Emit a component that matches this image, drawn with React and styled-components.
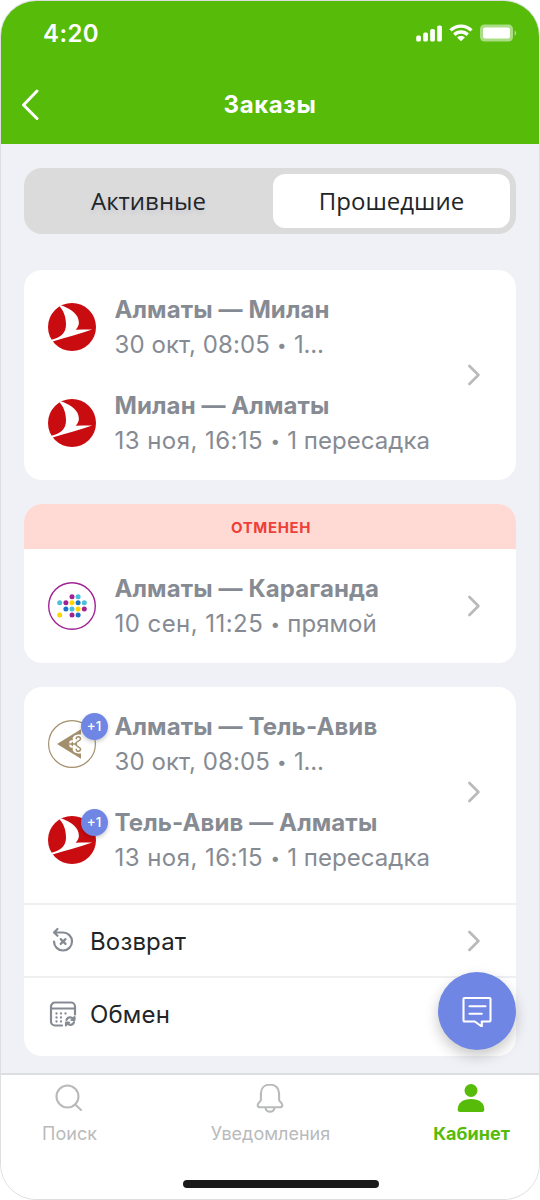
import React from "react"
import styled, { createGlobalStyle } from 'styled-components'

const Colors = {
  green: '#56bb09',
  page: '#f0f1f7',
  muted: '#868b93',
  text: '#222528',
  icon: '#b9babc',
  blue: '#7086e4',
  red: '#c90c0f',
  border: '#dcdee2'
}

const GlobalStyle = createGlobalStyle`
  html, body {
    margin: 0;
    padding: 0;
    background-color: #ffffff;
    font-family: Inter, "Liberation Sans", sans-serif;
  }

  * {
    box-sizing: border-box;
  }
`

const Phone = styled.div`
  position: relative;
  display: flex;
  flex-direction: column;
  width: 540px;
  height: 1200px;
  overflow: hidden;
  border: 1px solid ${Colors.border};
  border-radius: 36px;
  background: ${Colors.page};
`

const Header = styled.header`
  flex: none;
  height: 143px;
  background: ${Colors.green};
  color: #ffffff;
`

const StatusBar = styled.div`
  display: flex;
  align-items: center;
  justify-content: space-between;
  height: 64px;
  padding: 0 22px 0 42px;
`

const Clock = styled.span`
  font-size: 24px;
  font-weight: 600;
  letter-spacing: 0.4px;
`

const StatusIcons = styled.div`
  display: flex;
  align-items: center;
  gap: 7px;
`

const TitleBar = styled.div`
  display: grid;
  grid-template-columns: 60px 1fr 60px;
  align-items: center;
  height: 79px;
`

const BackButton = styled.button`
  display: flex;
  height: 40px;
  padding: 4px 0 4px 18px;
  border: 0;
  background: none;
  color: inherit;
`

const Title = styled.h1`
  margin: 0;
  text-align: center;
  font-size: 24px;
  font-weight: 700;
  letter-spacing: 0.6px;
`

const Content = styled.main`
  flex: 1;
  display: flex;
  flex-direction: column;
  gap: 24px;
  min-height: 0;
  padding: 24px 23px 0;
`

const Segment = styled.div`
  display: grid;
  grid-template-columns: 243px 237px;
  flex: none;
  height: 66px;
  margin-bottom: 12px;
  padding: 6px;
  border-radius: 18px;
  background: #dbdbdb;
`

const SegmentTab = styled.button`
  padding: ${p => p.$active ? '0 0 1px' : '0 6px 1px 0'};
  border: 0;
  border-radius: 12px;
  background: ${p => p.$active ? '#ffffff' : 'transparent'};
  color: ${Colors.text};
  font-family: "Open Sans", "Noto Sans", sans-serif;
  font-size: 24px;
  text-shadow: ${p => p.$active ? 'none' : '0 3px 4px rgba(90, 100, 180, 0.14)'};
`

const Card = styled.section`
  flex: none;
  overflow: hidden;
  border-radius: 18px;
  background: #ffffff;
`

const Banner = styled.div`
  height: 45px;
  padding-left: 2px;
  line-height: 47px;
  background: #ffdad5;
  color: #ee4038;
  text-align: center;
  font-size: 15px;
  font-weight: 700;
  letter-spacing: 0.6px;
`

const Trip = styled.div`
  display: flex;
  align-items: center;
  justify-content: space-between;
  padding: 24px 35px 24px 24px;
`

const Legs = styled.div`
  display: flex;
  flex-direction: column;
  gap: 30px;
`

const Leg = styled.div`
  display: flex;
  align-items: center;
  gap: 18.5px;
  height: 66px;
`

const LegText = styled.div`
  padding-top: 1px;
`

const LogoBox = styled.div`
  position: relative;
  width: 48px;
  height: 48px;

  svg {
    display: block;
  }
`

const Badge = styled.span`
  position: absolute;
  top: -7.5px;
  right: -12px;
  width: 27px;
  height: 27px;
  padding-right: 1px;
  border-radius: 50%;
  background: ${Colors.blue};
  box-shadow: 0 2px 4px rgba(0, 0, 0, 0.2);
  color: #ffffff;
  text-align: center;
  font-size: 13.5px;
  font-weight: 500;
  line-height: 27px;
`

const Route = styled.div`
  color: ${Colors.muted};
  font-size: 24px;
  font-weight: 700;
  line-height: 34px;
  letter-spacing: 0.1px;
  white-space: nowrap;
`

const Details = styled.div`
  display: flex;
  align-items: center;
  height: 35px;
  color: ${Colors.muted};
  font-size: 24px;
  line-height: 35px;
  white-space: nowrap;
`

const FlightDate = styled.span`
  letter-spacing: ${p => p.$spacing}px;
`

const Dot = styled.span`
  width: 24px;
  padding-top: 2px;
  text-align: center;
  font-size: 17px;
`

const Stops = styled.span`
  letter-spacing: ${p => p.$short ? '-0.2px' : '0.05px'};
`

const ActionRow = styled.div`
  display: flex;
  align-items: center;
  height: 73px;
  margin-bottom: ${p => p.$last ? '7px' : '0'};
  padding: 0 35px 0 24px;
  border-top: 2px solid #eff0f1;
`

const ActionLabel = styled.span`
  flex: 1;
  margin-left: 12px;
  padding-top: 2px;
  color: ${Colors.text};
  font-size: 24px;
  letter-spacing: 0.15px;
`

const Actions = styled.div`
  margin-top: -18px;
  padding-top: 24px;
`

const ChatButton = styled.button`
  position: absolute;
  top: 971px;
  left: 437px;
  display: flex;
  align-items: center;
  justify-content: center;
  width: 78px;
  height: 78px;
  border: 0;
  border-radius: 50%;
  background: ${Colors.blue};
  box-shadow: 0 6px 14px rgba(0, 0, 0, 0.22);
`

const TabBar = styled.nav`
  display: flex;
  flex: none;
  flex-direction: column;
  align-items: center;
  justify-content: space-between;
  height: 126px;
  padding-bottom: 11px;
  border-top: 2px solid ${Colors.border};
  background: #ffffff;
`

const Tabs = styled.div`
  display: grid;
  grid-template-columns: 136px 266px 136px;
  width: 100%;
`

const Tab = styled.div`
  display: flex;
  flex-direction: column;
  align-items: center;
  padding-top: 5px;
  color: ${p => p.$active ? Colors.green : Colors.icon};

  svg {
    margin-bottom: 6px;
  }
`

const TabLabel = styled.span`
  padding-left: 1px;
  font-size: 18px;
  font-weight: ${p => p.$active ? 700 : 400};
  line-height: 24px;
`

const HomeIndicator = styled.div`
  width: 196px;
  height: 8px;
  margin-left: 22px;
  border-radius: 4px;
  background: #1a1a1a;
`

const SignalIcon = () => (
  <svg width="26" height="17" viewBox="0 0 26 17" fill="#fff">
    <rect x="0.2" y="10.5" width="4.7" height="6" rx="1.6" />
    <rect x="7.2" y="7.5" width="4.7" height="9" rx="1.6" />
    <rect x="14.2" y="4" width="4.7" height="12.5" rx="1.6" />
    <rect x="21.2" y="0.5" width="4.7" height="16" rx="1.6" />
  </svg>
)

const WifiIcon = () => (
  <svg width="24" height="18" viewBox="0 0 24 18">
    <g fill="none" stroke="#fff" strokeWidth="3.3">
      <path d="M1.500 6.400C7.400 0.700 16.600 0.700 22.500 6.400" />
      <path d="M5.300 10.700c3.700-3.600 9.700-3.600 13.400 0" />
    </g>
    <path d="M12 17.300l-3.900-3.900c2.200-1.900 5.600-1.900 7.800 0z" fill="#fff" />
  </svg>
)

const BatteryIcon = () => (
  <svg width="37" height="18" viewBox="0 0 37 18">
    <rect x="0" y="0.5" width="33" height="17" rx="4.5" fill="#fff" opacity="0.5" />
    <rect x="3" y="3.5" width="27" height="11" rx="2" fill="#fff" />
    <path d="M34.600 6.500c2.200 1 2.200 4.200 0 5.200z" fill="#fff" opacity="0.5" />
  </svg>
)

const Chevron = () => (
  <svg width="14" height="24" viewBox="0 0 14 24" fill="none" stroke={Colors.icon} strokeWidth="2.7" strokeLinecap="round" strokeLinejoin="round">
    <path d="M2.400 3l9 9-9 9" />
  </svg>
)

const TurkishLogo = () => (
  <svg width="48" height="48" viewBox="0 0 48 48">
    <circle cx="24" cy="24" r="24" fill={Colors.red} />
    <path d="M11.600 3.600L13.800 2.500C23 6.300 30.800 11 30.900 19.500C30.900 22.500 29.500 25 27.600 26.700C33 26.700 38.500 26.300 44.200 26.600C31 31.200 18 34.800 4.600 38.400L3.400 36.800C13.400 34.600 18 29.500 18 21.500C18 14 15.600 8 11.600 3.600z" fill="#fff" />
  </svg>
)

const dots = [
  [24, 14.7, '#a12393'], [30.1, 14.7, '#48c0dc'],
  [11.7, 20.8, '#48c0dc'], [17.9, 20.8, '#a12393'], [24, 20.8, '#ffd500'], [30.1, 20.8, '#1a75c8'], [36.3, 20.8, '#48c0dc'],
  [17.9, 27, '#1a75c8'], [24, 27, '#48c0dc'], [30.1, 27, '#ffd500'], [36.3, 27, '#a12393'],
  [11.7, 33.1, '#ffd500'], [24, 33.1, '#a12393'], [30.1, 33.1, '#1a75c8']
]

const ScatLogo = () => (
  <svg width="48" height="48" viewBox="0 0 48 48">
    <circle cx="24" cy="24" r="23.3" fill="#fff" stroke="#a12393" strokeWidth="1.4" />
    {dots.map(([x, y, color]) => <circle key={`${x}-${y}`} cx={x} cy={y} r="2.5" fill={color} />)}
  </svg>
)

const AstanaLogo = () => (
  <svg width="48" height="48" viewBox="0 0 48 48">
    <circle cx="24" cy="24" r="23.4" fill="#fff" stroke="#a38f6c" strokeWidth="1.2" />
    {/* wing with the notch on its right side */}
    <path d="M9 24L33 9.300V14.500C28 14.200 24.700 15.700 24.700 18.700L25 20.500C22.500 19.800 21 21.200 21.300 22.900L20 24L21.300 25.100C21 26.800 22.500 28.200 25 27.500L24.700 29.300C24.700 32.300 28 33.800 33 33.500V38.700z" fill="#a38f6c" />
    <g fill="none" stroke="#a38f6c" strokeWidth="1.5" strokeLinecap="round">
      <path d="M28.200 18.800c0-3 4.500-2.600 4.300.2-.2 2.400-4.800 2-4.800 5" />
      <path d="M28.200 29.200c0 3 4.500 2.600 4.300-.2-.2-2.400-4.800-2-4.800-5" />
      <path d="M20 24h8.500M24.300 22.600v2.800" />
    </g>
  </svg>
)

const RefundIcon = () => (
  <svg width="30" height="30" viewBox="0 0 30 30" fill="none" stroke={Colors.muted} strokeWidth="2.2" strokeLinecap="round" strokeLinejoin="round">
    <path d="M6.300 6.500H15A9 9 0 1 1 6 15.500M9.500 3L6 6.500l3.500 3.300M12.700 13.100l4.800 4.800M17.500 13.100l-4.800 4.800" />
  </svg>
)

const ExchangeIcon = () => (
  <svg width="30" height="30" viewBox="0 0 30 30" fill="none" stroke={Colors.muted} strokeWidth="2.2" strokeLinecap="round" strokeLinejoin="round">
    <path d="M14 26.500H7a4 4 0 0 1-4-4V7.500a4 4 0 0 1 4-4h16a4 4 0 0 1 4 4v8M3.500 9.500h23" />
    <path d="M8.500 14.500h.01M13 14.500h.01M17.500 14.500h.01M8.500 18.500h.01M13 18.500h.01M8.500 22.500h.01M13 22.500h.01" strokeWidth="2.300" />
    <path d="M18.500 21c1-3.200 5.200-3.500 7-.8M26.500 18v3h-3M26 23.200c-1 3.200-5.200 3.500-7 .8M18 26.500v-3h3" />
  </svg>
)

const ChatIcon = () => (
  <svg width="32" height="32" viewBox="0 0 32 32" fill="none" stroke="#fff" strokeWidth="2.1" strokeLinecap="round" strokeLinejoin="round">
    <path d="M3.500 3h25a1 1 0 0 1 1 1v21.500a1 1 0 0 1-1 1h-7.700v5l-7-5H3.500a1 1 0 0 1-1-1V4a1 1 0 0 1 1-1zM8.500 11.300h16M8.500 18.800h12.300" />
  </svg>
)

const SearchIcon = () => (
  <svg width="30" height="36" viewBox="0 0 30 36" fill="none" stroke="currentColor" strokeWidth="2.100" strokeLinecap="round">
    <path d="M24.500 16.500a11 11 0 1 1-22 0 11 11 0 0 1 22 0zM21.300 24.500l5.700 5.500" />
  </svg>
)

const BellIcon = () => (
  <svg width="30" height="36" viewBox="0 0 30 36" fill="none" stroke="currentColor" strokeWidth="2.100" strokeLinejoin="round">
    <path d="M15 4.500c-5.400 0-9.100 3.500-9.100 9v6.500c0 1.600-3.200 2.700-3.200 5 0 1.600 1 2.300 2.600 2.300h19.400c1.600 0 2.600-.7 2.600-2.300 0-2.300-3.200-3.400-3.200-5v-6.500c0-5.500-3.700-9-9.100-9zM10.500 27.500c0 5.500 9 5.500 9 0" />
  </svg>
)

const UserIcon = () => (
  <svg width="30" height="36" viewBox="0 0 30 36" fill="currentColor">
    <circle cx="15" cy="10.500" r="6.500" />
    <path d="M1.700 29.500c0-6.500 5.300-10.500 13.300-10.500s13.300 4 13.300 10.500c0 1.500-.8 2.500-2 2.500H3.700c-1.200 0-2-1-2-2.500z" />
  </svg>
)

const FlightLeg = ({ logo: Logo, route, date, stops, spacing = 0.45, badge }) => (
  <Leg>
    <LogoBox>
      <Logo />
      {badge && <Badge>{badge}</Badge>}
    </LogoBox>
    <LegText>
      <Route>{route}</Route>
      <Details>
        <FlightDate $spacing={spacing}>{date}</FlightDate>
        <Dot>•</Dot>
        <Stops $short={stops === '1...'}>{stops}</Stops>
      </Details>
    </LegText>
  </Leg>
)

const App = () => (
  <>
    <GlobalStyle />
    <Phone>
      <Header>
        <StatusBar>
          <Clock>4:20</Clock>
          <StatusIcons>
            <SignalIcon />
            <WifiIcon />
            <BatteryIcon />
          </StatusIcons>
        </StatusBar>
        <TitleBar>
          <BackButton aria-label="Назад">
            <svg width="20" height="32" viewBox="0 0 20 32" fill="none" stroke="#fff" strokeWidth="3" strokeLinecap="round" strokeLinejoin="round">
              <path d="M18 2L4.500 16 18 29.500" />
            </svg>
          </BackButton>
          <Title>Заказы</Title>
        </TitleBar>
      </Header>

      <Content>
        <Segment>
          <SegmentTab>Активные</SegmentTab>
          <SegmentTab $active>Прошедшие</SegmentTab>
        </Segment>

        <Card>
          <Trip>
            <Legs>
              <FlightLeg logo={TurkishLogo} route="Алматы — Милан" date="30 окт, 08:05" stops="1..." spacing={0.1} />
              <FlightLeg logo={TurkishLogo} route="Милан — Алматы" date="13 ноя, 16:15" stops="1 пересадка" />
            </Legs>
            <Chevron />
          </Trip>
        </Card>

        <Card>
          <Banner>ОТМЕНЕН</Banner>
          <Trip>
            <FlightLeg logo={ScatLogo} route="Алматы — Караганда" date="10 сен, 11:25" stops="прямой" />
            <Chevron />
          </Trip>
        </Card>

        <Card>
          <Trip>
            <Legs>
              <FlightLeg logo={AstanaLogo} badge="+1" route="Алматы — Тель-Авив" date="30 окт, 08:05" stops="1..." spacing={0.1} />
              <FlightLeg logo={TurkishLogo} badge="+1" route="Тель-Авив — Алматы" date="13 ноя, 16:15" stops="1 пересадка" />
            </Legs>
            <Chevron />
          </Trip>
          <Actions>
            <ActionRow>
              <RefundIcon />
              <ActionLabel>Возврат</ActionLabel>
              <Chevron />
            </ActionRow>
            <ActionRow $last>
              <ExchangeIcon />
              <ActionLabel>Обмен</ActionLabel>
            </ActionRow>
          </Actions>
        </Card>
      </Content>

      <TabBar>
        <Tabs>
          <Tab>
            <SearchIcon />
            <TabLabel>Поиск</TabLabel>
          </Tab>
          <Tab>
            <BellIcon />
            <TabLabel>Уведомления</TabLabel>
          </Tab>
          <Tab $active>
            <UserIcon />
            <TabLabel $active>Кабинет</TabLabel>
          </Tab>
        </Tabs>
        <HomeIndicator />
      </TabBar>

      <ChatButton aria-label="Чат">
        <ChatIcon />
      </ChatButton>
    </Phone>
  </>
)

export default App
